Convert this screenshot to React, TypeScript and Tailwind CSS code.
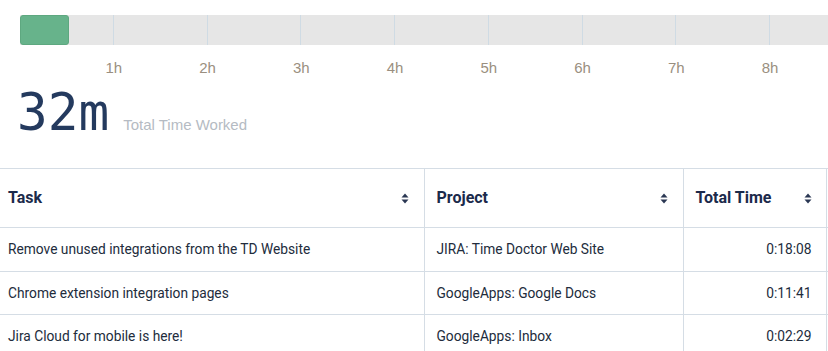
const hours = ['1h', '2h', '3h', '4h', '5h', '6h', '7h', '8h'];

const rows = [
  { task: 'Remove unused integrations from the TD Website', project: 'JIRA: Time Doctor Web Site', time: '0:18:08' },
  { task: 'Chrome extension integration pages', project: 'GoogleApps: Google Docs', time: '0:11:41' },
  { task: 'Jira Cloud for mobile is here!', project: 'GoogleApps: Inbox', time: '0:02:29' },
];

function SortIcon() {
  return (
    <svg width="8" height="11" viewBox="0 0 8 11" className="shrink-0 text-[#2a3753]">
      <path d="M4 0.5 L7.5 4.5 L0.5 4.5 Z" fill="currentColor" />
      <path d="M4 10.5 L7.5 6.5 L0.5 6.5 Z" fill="currentColor" />
    </svg>
  );
}

function HeaderCell({ label, className }: { label: string; className: string }) {
  return (
    <th className={`h-[59px] border-r border-[#d5dde5] p-0 text-left align-middle ${className}`}>
      <div className="flex items-center justify-between">
        <span className="text-[16px] font-bold text-[#1b2a4b]">{label}</span>
        <SortIcon />
      </div>
    </th>
  );
}

export default function App() {
  return (
    <div className="w-[828px] h-[351px] overflow-hidden bg-white font-['Roboto',sans-serif]">
      <div className="pt-[15px] pl-[20px]">
        <div className="flex h-[30px] w-[1000px] bg-[#e6e6e6]">
          <div className="relative w-[93.75px] shrink-0 border-r border-[#cfdbe4]">
            <div className="h-full w-[49px] rounded-[3px] border border-[#5ea880] bg-[#67b38b]" />
          </div>
          {hours.slice(1).map((h) => (
            <div key={h} className="w-[93.75px] shrink-0 border-r border-[#cfdbe4]" />
          ))}
        </div>
        <div className="mt-[14px] flex pl-[47px] font-['Liberation_Sans',sans-serif] text-[15px] leading-[18px] text-[#9a8f80]">
          {hours.map((h) => (
            <div key={h} className="w-[93.75px] shrink-0 text-center">
              {h}
            </div>
          ))}
        </div>
      </div>
      <div className="flex items-baseline pl-[17px] mt-[10px]">
        <span className="font-['DejaVu_Sans_Mono',monospace] text-[51px] leading-[52px] text-[#243a5e]">
          32m
        </span>
        <span className="ml-[14px] font-['Liberation_Sans',sans-serif] text-[15px] text-[#b5bbc3]">
          Total Time Worked
        </span>
      </div>
      <div className="mt-[29px]">
        <table className="w-[840px] border-collapse table-fixed">
          <thead>
            <tr className="border-t border-b border-[#d5dde5]">
              <HeaderCell label="Task" className="w-[424px] pl-2 pr-[15px]" />
              <HeaderCell label="Project" className="w-[259px] pl-3 pr-[15px]" />
              <HeaderCell label="Total Time" className="w-[143px] pl-3 pr-[14px]" />
              <th className="p-0" />
            </tr>
          </thead>
          <tbody className="text-[13.75px] text-[#222c3c]">
            {rows.map((r, i) => (
              <tr key={r.time} className="border-b border-[#d5dde5]">
                <td className={`${i === 0 ? 'h-[44px]' : 'h-[43px]'} border-r border-[#d5dde5] pl-2`}>{r.task}</td>
                <td className="border-r border-[#d5dde5] pl-3">{r.project}</td>
                <td className="border-r border-[#d5dde5] pr-[14px] text-right">{r.time}</td>
                <td />
              </tr>
            ))}
          </tbody>
        </table>
      </div>
    </div>
  );
}
